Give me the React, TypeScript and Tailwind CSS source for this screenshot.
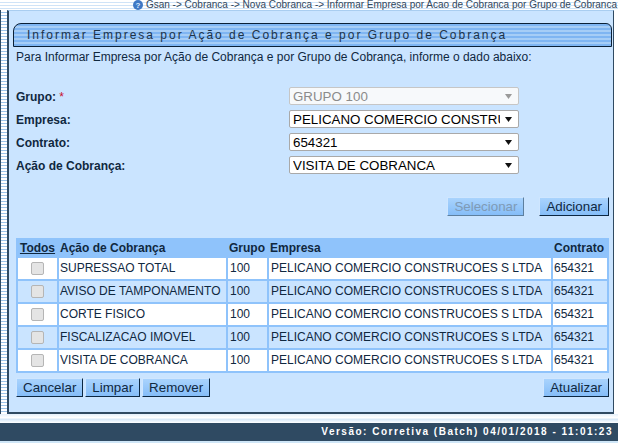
const rows = [
  "SUPRESSAO TOTAL",
  "AVISO DE TAMPONAMENTO",
  "CORTE FISICO",
  "FISCALIZACAO IMOVEL",
  "VISITA DE COBRANCA",
];

function Btn({ label, disabled }: { label: string; disabled?: boolean }) {
  return (
    <div
      className={
        "h-[19px] px-[6px] flex items-center text-[13.33px] leading-none border border-solid bg-[linear-gradient(#a9d3fd,#85bdf8)] border-t-[#cfe6ff] border-l-[#cfe6ff] " +
        (disabled
          ? "text-[#7f9ab5] border-r-[#5d7f9e] border-b-[#5d7f9e]"
          : "text-[#10283f] border-r-[#0c2742] border-b-[#0c2742]")
      }
    >
      {label}
    </div>
  );
}

function Sel({ text, disabled, clip }: { text: string; disabled?: boolean; clip?: boolean }) {
  return (
    <div
      className={
        "w-[230px] h-[18px] rounded-[2px] border border-solid flex items-center pl-[3px] pr-[6px] text-[13.33px] leading-none " +
        (disabled ? "bg-[#f7f9fb] text-[#8b8b8b] border-[#c6c6c6]" : "bg-white text-black border-[#a9a9a9]")
      }
    >
      <span className={"whitespace-nowrap overflow-hidden pt-[1px] " + (clip ? "w-[207px] shrink-0" : "flex-1")}>{text}</span>
      {clip && <span className="flex-1" />}
      <svg width="7" height="5" viewBox="0 0 7 5" className="shrink-0">
        <path d="M0 0H7L3.5 5Z" fill={disabled ? "#9a9a9a" : "#111"} />
      </svg>
    </div>
  );
}

function Field({ label, star, ...p }: { label: string; star?: boolean; text: string; disabled?: boolean; clip?: boolean }) {
  return (
    <div className="flex items-center justify-between h-[18px] pr-[90px]">
      <div className="pt-[1px] text-[12px] leading-none font-bold text-[#10283f]">
        {label}
        {star && <span className="text-[#c8102e] font-normal"> *</span>}
      </div>
      <Sel {...p} />
    </div>
  );
}

export default function App() {
  return (
    <div className="w-[618px] h-[443px] overflow-hidden bg-white font-['Liberation_Sans',Arial,sans-serif] flex flex-col relative">
      {/* breadcrumb */}
      <div className="h-[10px] shrink-0 bg-[repeating-linear-gradient(#ffffff_0,#ffffff_2px,#cfe3f7_2px,#cfe3f7_3px)] flex items-center justify-end pr-[1px] gap-[3px] overflow-visible">
        <svg width="10" height="10" viewBox="0 0 10 10" className="shrink-0">
          <circle cx="5" cy="5" r="5" fill="#3f78c4" />
          <text x="5" y="8" fontSize="8" fontWeight="bold" fill="#dcebff" textAnchor="middle" fontFamily="Liberation Sans">?</text>
        </svg>
        <span className="text-[10px] leading-none whitespace-nowrap text-[#33475b]">
          Gsan -&gt; Cobranca -&gt; Nova Cobranca -&gt; Informar Empresa por Acao de Cobranca por Grupo de Cobranca
        </span>
      </div>

      {/* main row */}
      <div className="h-[404px] shrink-0 flex">
        <div className="w-[7px] shrink-0 border-l border-solid border-[#2f4a62] bg-[repeating-linear-gradient(#ffffff_0,#ffffff_2px,#9cc4ea_2px,#9cc4ea_3px)]" />
        <div className="w-[607px] shrink-0 border-2 border-r-[1px] border-solid border-[#2f4a62] border-t-[#a9cdf0] border-t-[1px] border-l-[#2f4a62] bg-[#cae4ff] pl-[7px] pr-[4px] pt-[12px] flex flex-col">
          {/* title */}
          <div className="h-[24px] w-[599px] -ml-[3px] shrink-0 relative border border-solid border-[#0b2036] rounded-tl-[8px] rounded-tr-[6px] bg-[repeating-linear-gradient(#7fb5f2_0,#7fb5f2_2px,#a6cdf6_2px,#a6cdf6_4px)] flex items-center pl-[13px]">
            <span className="text-[12px] leading-none tracking-[2px] text-[#1d3349] whitespace-nowrap">
              Informar Empresa por Ação de Cobrança e por Grupo de Cobrança
            </span>
          </div>
          <div className="mt-[2px] h-[16px] flex items-center text-[12px] leading-none text-[#10283f] whitespace-nowrap">
            Para Informar Empresa por Ação de Cobrança e por Grupo de Cobrança, informe o dado abaixo:
          </div>

          <div className="mt-[22px] flex flex-col gap-[5px]">
            <Field label="Grupo:" star text="GRUPO 100" disabled />
            <Field label="Empresa:" text="PELICANO COMERCIO CONSTRUCOES S LTDA" clip />
            <Field label="Contrato:" text="654321" />
            <Field label="Ação de Cobrança:" text="VISITA DE COBRANCA" />
          </div>

          <div className="mt-[23px] flex justify-end gap-[15px]">
            <Btn label="Selecionar" disabled />
            <Btn label="Adicionar" />
          </div>

          {/* table */}
          <table className="mt-[22px] w-[593px] border-separate border-spacing-[2px] bg-[#8fc3fb] text-[12px] leading-none text-[#10283f] table-fixed">
            <colgroup>
              <col className="w-[39px]" />
              <col className="w-[167px]" />
              <col className="w-[39px]" />
              <col className="w-[282px]" />
              <col className="w-[54px]" />
            </colgroup>
            <thead>
              <tr className="h-[16px]">
                <th className="p-0 text-center underline font-bold">Todos</th>
                <th className="p-0 pl-[1px] text-left font-bold">Ação de Cobrança</th>
                <th className="p-0 pl-[1px] text-left font-bold">Grupo</th>
                <th className="p-0 pl-[1px] text-left font-bold">Empresa</th>
                <th className="p-0 pl-[1px] text-left font-bold">Contrato</th>
              </tr>
            </thead>
            <tbody>
              {rows.map((r, i) => (
                <tr key={r} className={"h-[21px] " + (i % 2 ? "bg-[#cae4ff]" : "bg-white")}>
                  <td className="p-0">
                    <div className="mx-auto w-[13px] h-[13px] rounded-[2px] border border-solid border-[#b5b5b5] bg-[#e4e4e4]" />
                  </td>
                  <td className="p-0 pb-[1px] pl-[1px] whitespace-nowrap">{r}</td>
                  <td className="p-0 pb-[1px] pl-[2px]">100</td>
                  <td className="p-0 pb-[1px] pl-[2px] whitespace-nowrap">PELICANO COMERCIO CONSTRUCOES S LTDA</td>
                  <td className="p-0 pb-[1px] pl-[1px]">654321</td>
                </tr>
              ))}
            </tbody>
          </table>

          <div className="mt-[5px] flex items-center gap-[2px]">
            <Btn label="Cancelar" />
            <Btn label="Limpar" />
            <Btn label="Remover" />
            <div className="flex-1" />
            <Btn label="Atualizar" />
          </div>
        </div>
      </div>

      {/* footer */}
      <div className="h-[9px] shrink-0 bg-[linear-gradient(#e4f0fb,#ffffff_40%,#d8e9f8_60%,#ffffff)]" />
      <div className="h-[18px] shrink-0 bg-[#2f4a62] flex items-center justify-end pr-[5px]">
        <span className="text-[10px] leading-none font-bold tracking-[1.5px] text-white whitespace-nowrap">
          Versão: Corretiva (Batch) 04/01/2018 - 11:01:23
        </span>
      </div>
      <div className="flex-1 bg-[#cfe6f7]" />
    </div>
  );
}
